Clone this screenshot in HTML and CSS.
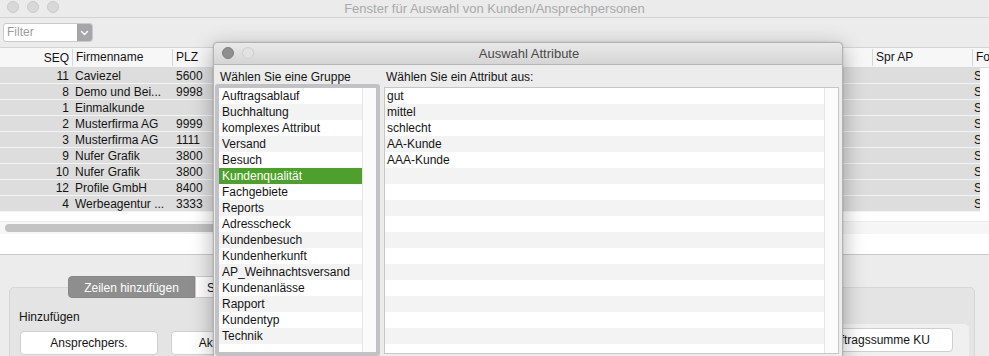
FILE: index.html
```html
<!DOCTYPE html>
<html lang="de">
<head>
<meta charset="utf-8">
<title>Fenster für Auswahl von Kunden/Ansprechpersonen</title>
<link rel="stylesheet" href="styles.css">
</head>
<body>
<div class="win">
  <div class="titlebar">
    <div class="lights">
      <span class="light"></span><span class="light"></span><span class="light"></span>
    </div>
    <div class="title">Fenster für Auswahl von Kunden/Ansprechpersonen</div>
  </div>
  <div class="toolbar">
    <div class="combo">
      <span class="combo-field">Filter</span>
      <span class="combo-btn">
        <svg width="9" height="6" viewBox="0 0 9 6"><path d="M1.5 1.5 L4.5 4.5 L7.5 1.5" fill="none" stroke="#fff" stroke-width="1.4" stroke-linecap="round" stroke-linejoin="round"/></svg>
      </span>
    </div>
  </div>
  <div class="table">
    <div class="thead">
      <div class="c seq">SEQ</div>
      <div class="c firm sep">Firmenname</div>
      <div class="c plz sep">PLZ</div>
      <div class="c spr sep">Spr AP</div>
      <div class="c fo sep">Fo</div>
    </div>
    <div class="rows">
      <div class="row"><div class="c seq">11</div><div class="c firm">Caviezel</div><div class="c plz">5600</div><div class="c spr"></div><div class="c fo">S</div></div>
      <div class="row"><div class="c seq">8</div><div class="c firm">Demo und Bei...</div><div class="c plz">9998</div><div class="c spr"></div><div class="c fo">S</div></div>
      <div class="row"><div class="c seq">1</div><div class="c firm">Einmalkunde</div><div class="c plz"></div><div class="c spr"></div><div class="c fo">S</div></div>
      <div class="row"><div class="c seq">2</div><div class="c firm">Musterfirma AG</div><div class="c plz">9999</div><div class="c spr"></div><div class="c fo">S</div></div>
      <div class="row"><div class="c seq">3</div><div class="c firm">Musterfirma AG</div><div class="c plz">1111</div><div class="c spr"></div><div class="c fo">S</div></div>
      <div class="row"><div class="c seq">9</div><div class="c firm">Nufer Grafik</div><div class="c plz">3800</div><div class="c spr"></div><div class="c fo">S</div></div>
      <div class="row"><div class="c seq">10</div><div class="c firm">Nufer Grafik</div><div class="c plz">3800</div><div class="c spr"></div><div class="c fo">S</div></div>
      <div class="row"><div class="c seq">12</div><div class="c firm">Profile GmbH</div><div class="c plz">8400</div><div class="c spr"></div><div class="c fo">S</div></div>
      <div class="row"><div class="c seq">4</div><div class="c firm">Werbeagentur ...</div><div class="c plz">3333</div><div class="c spr"></div><div class="c fo">S</div></div>
    </div>
    <div class="hscroll"><div class="thumb"></div></div>
    <div class="tfill"></div>
  </div>
  <div class="bottom">
    <div class="tabs">
      <div class="tab active">Zeilen hinzufügen</div>
      <div class="tab">Spalten</div>
    </div>
    <div class="group">
      <div class="glabel">Hinzufügen</div>
      <div class="btnrow">
        <div class="btn">Ansprechpers.</div>
        <div class="btn">Aktivitäten (AP)</div>
        <div class="panel"><div class="btn wide">Auftragssumme KU</div></div>
      </div>
    </div>
  </div>
</div>

<div class="dialog">
  <div class="dtitlebar">
    <div class="dlights"><span class="dlight dark"></span><span class="dlight"></span></div>
    <div class="dtitle">Auswahl Attribute</div>
  </div>
  <div class="dbody">
    <div class="col left">
      <div class="lbl">Wählen Sie eine Gruppe</div>
      <div class="frame">
        <div class="list">
          <div class="items">
            <div class="it">Auftragsablauf</div>
            <div class="it">Buchhaltung</div>
            <div class="it">komplexes Attribut</div>
            <div class="it">Versand</div>
            <div class="it">Besuch</div>
            <div class="it sel">Kundenqualität</div>
            <div class="it">Fachgebiete</div>
            <div class="it">Reports</div>
            <div class="it">Adresscheck</div>
            <div class="it">Kundenbesuch</div>
            <div class="it">Kundenherkunft</div>
            <div class="it">AP_Weihnachtsversand</div>
            <div class="it">Kundenanlässe</div>
            <div class="it">Rapport</div>
            <div class="it">Kundentyp</div>
            <div class="it">Technik</div>
            <div class="it"></div>
            <div class="it"></div>
          </div>
          <div class="vtrack"></div>
        </div>
      </div>
    </div>
    <div class="col right">
      <div class="lbl">Wählen Sie ein Attribut aus:</div>
      <div class="rlist">
        <div class="items">
          <div class="it">gut</div>
          <div class="it">mittel</div>
          <div class="it">schlecht</div>
          <div class="it">AA-Kunde</div>
          <div class="it">AAA-Kunde</div>
          <div class="it"></div><div class="it"></div><div class="it"></div>
          <div class="it"></div><div class="it"></div><div class="it"></div>
          <div class="it"></div><div class="it"></div><div class="it"></div>
          <div class="it"></div><div class="it"></div><div class="it"></div>
          <div class="it"></div>
        </div>
        <div class="vtrack"></div>
      </div>
    </div>
  </div>
</div>
</body>
</html>
```

FILE: styles.css
```css
* { box-sizing: border-box; }
html, body {
  margin: 0;
  padding: 0;
  width: 989px;
  height: 356px;
  overflow: hidden;
  background: #ececec;
  font-family: "Liberation Sans", Arial, sans-serif;
  font-size: 12px;
  color: #141414;
}

.win { width: 989px; height: 356px; overflow: hidden; }

.titlebar {
  height: 18px;
  background: #ebebeb;
  border-bottom: 1px solid #d2d2d2;
  display: flex;
  align-items: center;
  justify-content: center;
  position: relative;
}
.lights {
  position: absolute;
  left: 7px;
  top: 1px;
  display: flex;
  gap: 8px;
}
.light {
  width: 12px; height: 12px; border-radius: 50%;
  background: #d8d8d8;
  border: 1px solid #cbcbcb;
}
.title {
  font-size: 13px;
  color: #a9a9a9;
  line-height: 16px;
}

.toolbar { padding: 5px 3px 5px 3px; height: 29px; }
.combo {
  width: 90px; height: 19px;
  display: flex;
  border: 1px solid #c9c9c9;
  border-radius: 3px;
  background: #fff;
  overflow: hidden;
}
.combo-field {
  flex: 1;
  color: #9c9c9c;
  padding-left: 3px;
  line-height: 17px;
  font-size: 12px;
}
.combo-btn {
  width: 15px;
  background: #a6a6aa;
  display: flex; align-items: center; justify-content: center;
}

.table {
  background: #fff;
  border-bottom: 1px solid #c9c9c9;
}
.thead {
  height: 21px;
  display: flex;
  background: #f7f7f7;
  border-top: 1px solid #d4d4d4;
  border-bottom: 1px solid #dadada;
  align-items: center;
  width: 989px;
}
.c { line-height: 16px; white-space: nowrap; overflow: hidden; }
.seq { width: 72px; text-align: right; padding-right: 3px; }
.firm { width: 100px; padding-left: 3px; }
.plz { width: 700px; padding-left: 3px; }
.spr { width: 100px; padding-left: 3px; }
.fo { width: 8px; padding-left: 3px; }
.thead .sep { border-left: 1px solid #d6d6d6; line-height: 17px; }
.thead .firm { width: 100px; }
.thead .plz { width: 700px; }
.thead .fo { width: 17px; overflow: visible; }

.rows { width: 980px; }
.row {
  height: 16px;
  display: flex;
  background: #dddddd;
  border-bottom: 1px solid #f4f4f4;
}
.row .c { line-height: 16px; }
.row .seq { width: 72px; }
.row .firm { width: 101px; }
.row .plz { width: 700px; }
.row .spr { width: 99px; }
.row .fo { width: 8px; padding-left: 2px; }

.hscroll {
  margin-top: 9px;
  height: 13px;
  padding: 2px 2px;
  background: #f6f6f6;
  border-top: 1px solid #ededed;
}
.thumb {
  height: 8px;
  width: 600px;
  margin-left: 3px;
  border-radius: 4px;
  background: #c3c3c3;
}
.tfill { height: 20px; }

.bottom { padding-top: 21px; }
.tabs {
  display: flex;
  padding-left: 68px;
  position: relative;
  z-index: 1;
}
.tab {
  height: 22px;
  line-height: 22px;
  padding: 0 11px;
  background: #fff;
  border: 1px solid #cdcdcd;
  font-size: 12px;
}
.tab.active {
  background: #8e8e8e;
  border-color: #888;
  color: #fff;
  border-radius: 4px 0 0 4px;
  width: 127px;
  text-align: center;
  padding: 0;
}
.group {
  margin: -11px 14px 0 9px;
  height: 90px;
  background: #e4e4e4;
  border: 1px solid #d6d6d6;
  border-radius: 5px;
  padding: 21px 5px 0 9px;
}
.glabel { line-height: 16px; height: 19px; }
.btnrow { display: flex; align-items: flex-start; }
.btn {
  width: 138px;
  height: 24px;
  margin-top: 3px;
  line-height: 22px;
  text-align: center;
  background: #fff;
  border: 1px solid #cfcfcf;
  border-radius: 4px;
  margin-right: 13px;
  margin-left: 0;
  white-space: nowrap;
}
.btnrow > .btn:first-child { margin-left: 1px; }
.panel {
  margin-left: auto;
  margin-top: -4px;
  width: 260px;
  height: 40px;
  background: #f0f0f0;
  border-radius: 0 5px 0 0;
  display: flex;
  justify-content: flex-end;
  padding: 4px 16px 0 0;
}
.btn.wide { width: 150px; margin: 0; }

/* Dialog */
.dialog {
  position: absolute;
  z-index: 10;
  left: 213px;
  top: 42px;
  width: 630px;
  height: 314px;
  background: #ececec;
  border: 1px solid #b3b3b3;
  border-bottom: none;
  border-radius: 5px 5px 0 0;
  box-shadow: 0 6px 22px rgba(0,0,0,0.32), 0 0 2px rgba(0,0,0,0.2);
  overflow: hidden;
}
.dtitlebar {
  height: 22px;
  background: linear-gradient(#e9e9e9, #d5d5d5);
  border-bottom: 1px solid #b6b6b6;
  border-radius: 5px 5px 0 0;
  display: flex;
  align-items: center;
  justify-content: center;
  position: relative;
}
.dlights {
  position: absolute;
  left: 8px; top: 4px;
  display: flex; gap: 8px;
}
.dlight {
  width: 12px; height: 12px; border-radius: 50%;
  background: #e2e2e2;
  border: 1px solid #cdcdcd;
}
.dlight.dark { background: #8f8f8f; border-color: #7d7d7d; }
.dtitle { font-size: 13px; color: #4a4a4a; line-height: 16px; padding-left: 2px; }

.dbody {
  display: flex;
  padding: 0 3px 0 1px;
  gap: 4px;
}
.col.left { width: 165px; }
.col.right { width: 455px; }
.lbl {
  height: 19px;
  padding-top: 6px;
  line-height: 13px;
  padding-left: 5px;
}
.col.right .lbl { padding-left: 2px; }
.frame {
  height: 272px;
  border: 4px solid #c2c2c6;
  border-radius: 3px;
  background: #fff;
  overflow: hidden;
}
.list { display: flex; height: 100%; }
.items { flex: 1; overflow: hidden; }
.it {
  height: 16px;
  line-height: 16px;
  padding-left: 3px;
  background: #fff;
  white-space: nowrap;
}
.it:nth-child(even) { background: #f3f3f3; }
.it.sel { background: #4e9f2e; color: #fff; }
.vtrack {
  width: 14px;
  background: #fbfbfb;
  border-left: 1px solid #e6e6e6;
}
.rlist {
  margin-top: 3px;
  height: 267px;
  display: flex;
  border: 1px solid #c6c6c6;
  background: #fff;
  overflow: hidden;
}
.rlist .it { padding-left: 2px; }
```
